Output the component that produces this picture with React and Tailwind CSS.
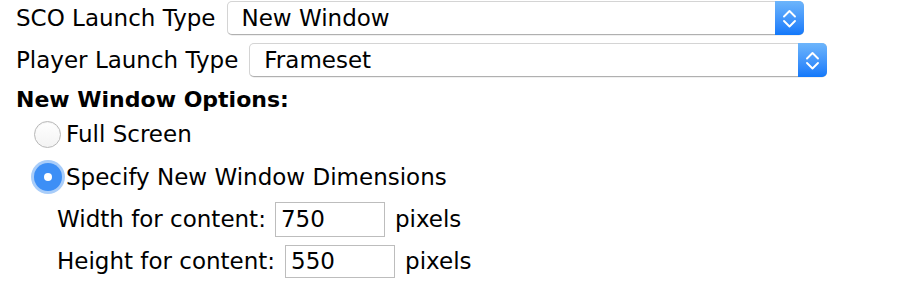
import React from "react";

function Chevrons() {
  return (
    <svg width="29" height="34" viewBox="0 0 29 34" className="block">
      <polyline points="9,15.5 14.5,10 20,15.5" fill="none" stroke="white" strokeWidth="1.9" strokeLinecap="round" strokeLinejoin="round" />
      <polyline points="9,20 14.5,25.5 20,20" fill="none" stroke="white" strokeWidth="1.9" strokeLinecap="round" strokeLinejoin="round" />
    </svg>
  );
}

function Select({ value, width }) {
  return (
    <div
      className={`flex h-[34px] ${width} items-stretch rounded-[5px] border border-[#d4d4d4] border-b-[#b0b0b0] bg-white shadow-[0_0.5px_0.5px_rgba(0,0,0,0.12)]`}
    >
      <div className="flex flex-1 items-center pl-[14px] leading-[27px]">{value}</div>
      <div className="-my-px -mr-px flex w-[29px] items-center justify-center rounded-r-[5px] bg-gradient-to-b from-[#6db5fb] to-[#1178fa]">
        <Chevrons />
      </div>
    </div>
  );
}

export default function App() {
  return (
    <div className="h-[284px] w-[898px] bg-white pl-4 pt-px font-['DejaVu_Sans',sans-serif] text-[23px] leading-[27px] text-black">
      <div className="flex h-[34px] items-center">
        <span className="mr-[11px]">SCO Launch Type</span>
        <Select value="New Window" width="w-[577px]" />
      </div>
      <div className="mt-[8px] flex h-[34px] items-center">
        <span className="mr-[11px]">Player Launch Type</span>
        <Select value="Frameset" width="w-[578px]" />
      </div>
      <div className="mt-[10px] text-[22px] font-bold leading-[26px]">New Window Options:</div>
      <div className="mt-[7px] flex h-[28px] items-center pl-[18px]">
        <span className="h-[27px] w-[27px] rounded-full border border-[#b8b8b8] bg-gradient-to-b from-white to-[#f3f3f3] shadow-[inset_0_1px_1px_rgba(0,0,0,0.05)]" />
        <span className="ml-[5px]">Full Screen</span>
      </div>
      <div className="mt-[15px] flex h-[28px] items-center pl-[18px]">
        <span className="flex h-[28px] w-[28px] items-center justify-center rounded-full bg-[#3d8ff6] ring-[3px] ring-[#a9cdf9]">
          <span className="h-[8px] w-[8px] rounded-full bg-white" />
        </span>
        <span className="ml-[4px]">Specify New Window Dimensions</span>
      </div>
      <div className="mt-[11px] flex h-[35px] items-center pl-[41px]">
        <span>Width for content:</span>
        <div className="ml-[9px] flex h-[35px] w-[110px] items-center border border-[#bdbdbd] pl-[5px]">750</div>
        <span className="ml-[10px]">pixels</span>
      </div>
      <div className="mt-[8px] flex h-[33px] items-center pl-[41px]">
        <span>Height for content:</span>
        <div className="ml-[10px] flex h-[33px] w-[110px] items-center border border-[#bdbdbd] pl-[5px]">550</div>
        <span className="ml-[10px]">pixels</span>
      </div>
    </div>
  );
}
